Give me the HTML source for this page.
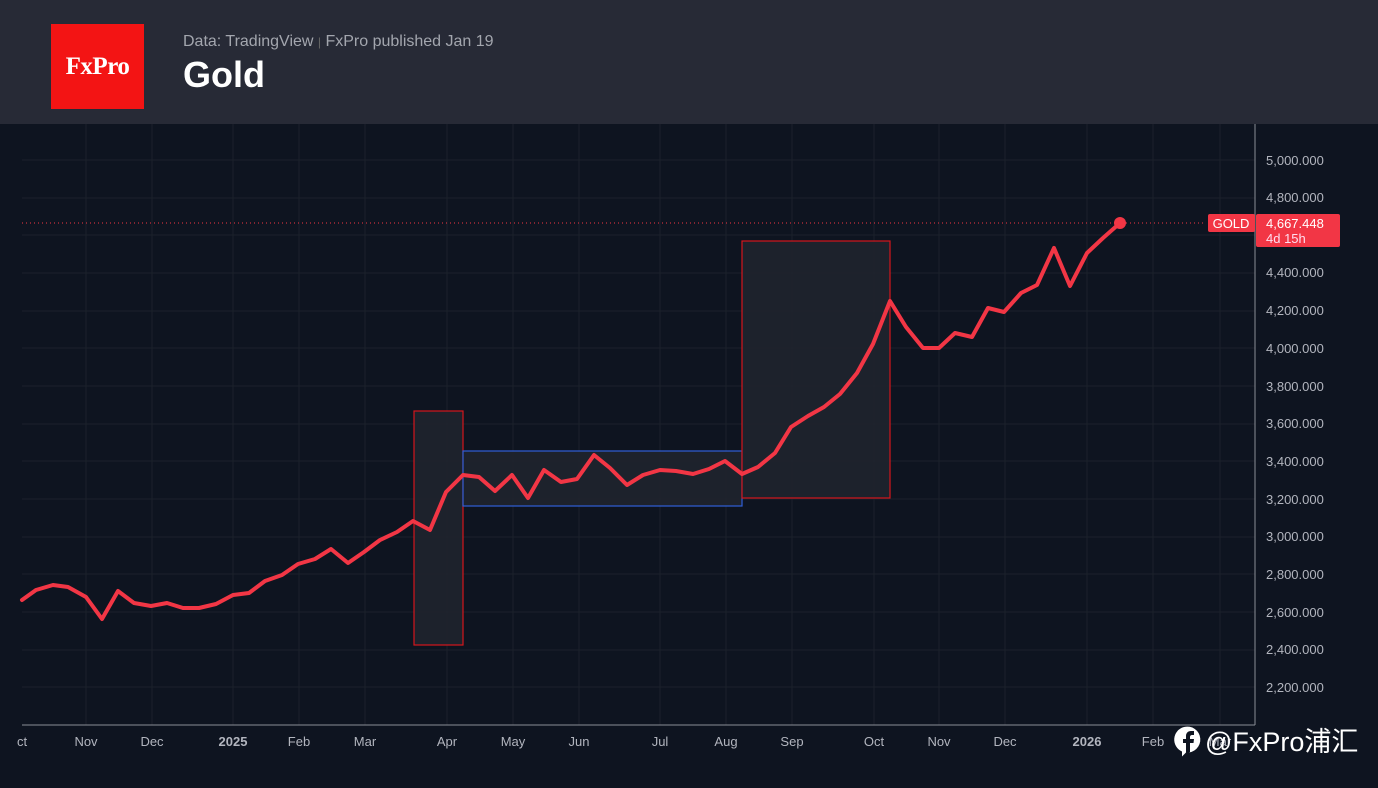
<!DOCTYPE html>
<html><head><meta charset="utf-8"><style>
html,body{margin:0;padding:0;width:1378px;height:788px;overflow:hidden;background:#0e1420;font-family:"Liberation Sans","Noto Sans CJK SC",sans-serif}
#hdr{position:absolute;left:0;top:0;width:1378px;height:124px;background:#272a36}
#logo{position:absolute;left:51px;top:24px;width:93px;height:85px;background:#f31414;color:#fff;font-family:"Liberation Serif",serif;font-size:25px;font-weight:bold;text-align:center;line-height:85px;letter-spacing:-0.5px}
#sub{position:absolute;left:183px;top:33px;color:#a3a6ae;font-size:16px}
#title{position:absolute;left:183px;top:54px;color:#fff;font-size:36px;font-weight:bold}
svg{position:absolute;left:0;top:0}
</style></head><body>
<svg width="1378" height="788" viewBox="0 0 1378 788">
<rect x="0" y="124" width="1378" height="664" fill="#0e1420"/>
<g stroke="#1c212b" stroke-width="1">
<line x1="22" y1="160" x2="1255" y2="160"/><line x1="22" y1="198" x2="1255" y2="198"/><line x1="22" y1="235" x2="1255" y2="235"/><line x1="22" y1="273" x2="1255" y2="273"/><line x1="22" y1="311" x2="1255" y2="311"/><line x1="22" y1="348" x2="1255" y2="348"/><line x1="22" y1="386" x2="1255" y2="386"/><line x1="22" y1="424" x2="1255" y2="424"/><line x1="22" y1="461" x2="1255" y2="461"/><line x1="22" y1="499" x2="1255" y2="499"/><line x1="22" y1="537" x2="1255" y2="537"/><line x1="22" y1="574" x2="1255" y2="574"/><line x1="22" y1="612" x2="1255" y2="612"/><line x1="22" y1="650" x2="1255" y2="650"/><line x1="22" y1="687" x2="1255" y2="687"/>
<line x1="86" y1="124" x2="86" y2="725"/><line x1="152" y1="124" x2="152" y2="725"/><line x1="233" y1="124" x2="233" y2="725"/><line x1="299" y1="124" x2="299" y2="725"/><line x1="365" y1="124" x2="365" y2="725"/><line x1="447" y1="124" x2="447" y2="725"/><line x1="513" y1="124" x2="513" y2="725"/><line x1="579" y1="124" x2="579" y2="725"/><line x1="660" y1="124" x2="660" y2="725"/><line x1="726" y1="124" x2="726" y2="725"/><line x1="792" y1="124" x2="792" y2="725"/><line x1="874" y1="124" x2="874" y2="725"/><line x1="939" y1="124" x2="939" y2="725"/><line x1="1005" y1="124" x2="1005" y2="725"/><line x1="1087" y1="124" x2="1087" y2="725"/><line x1="1153" y1="124" x2="1153" y2="725"/><line x1="1220" y1="124" x2="1220" y2="725"/>
</g>
<line x1="22" y1="725" x2="1255" y2="725" stroke="#8a8e96" stroke-width="1"/>
<line x1="1255" y1="124" x2="1255" y2="725" stroke="#8a8e96" stroke-width="1"/>
<rect x="414" y="411" width="49" height="234" fill="#1f232d" fill-opacity=".9" stroke="#d4161c" stroke-width="1.2"/>
<rect x="463" y="451" width="279" height="55" fill="#1f232d" fill-opacity=".9" stroke="#2f5fd8" stroke-width="1.2"/>
<rect x="742" y="241" width="148" height="257" fill="#1f232d" fill-opacity=".9" stroke="#d4161c" stroke-width="1.2"/>
<line x1="22" y1="223" x2="1205" y2="223" stroke="#f23645" stroke-width="1" stroke-dasharray="1,3"/>
<polyline fill="none" stroke="#f23645" stroke-width="4" stroke-linejoin="round" stroke-linecap="round" points="22,600 36,590 53,585 68,587 86,597 102,619 118,591 134,603 151,606 167,603 183,608 199,608 216,604 233,595 249,593 265,581 282,575 298,564 315,559 331,549 348,563 364,552 380,540 397,532 413,521 430,530 446,492 463,475 479,477 495,491 512,475 528,498 544,470 561,482 577,479 594,455 610,468 627,485 643,475 660,470 676,471 693,474 709,469 725,461 742,474 758,467 775,453 791,427 808,416 824,407 840,394 857,373 873,344 890,301 906,327 923,348 939,348 955,333 972,337 988,308 1004,312 1021,293 1037,285 1054,248 1070,286 1087,253 1103,238 1120,223"/>
<circle cx="1120" cy="223" r="6" fill="#f23645"/>
<rect x="1208" y="214" width="47" height="18" rx="2" fill="#f23645"/>
<text x="1231" y="228" fill="#fff" font-size="13" text-anchor="middle">GOLD</text>
<rect x="1256" y="214" width="84" height="33" rx="2" fill="#f23645"/>
<text x="1266" y="228" fill="#fff" font-size="13">4,667.448</text>
<text x="1266" y="243" fill="#fde" font-size="13">4d 15h</text>
<g fill="#b2b5be" font-size="13">
<text x="1266" y="165">5,000.000</text><text x="1266" y="202">4,800.000</text><text x="1266" y="277">4,400.000</text><text x="1266" y="315">4,200.000</text><text x="1266" y="353">4,000.000</text><text x="1266" y="391">3,800.000</text><text x="1266" y="428">3,600.000</text><text x="1266" y="466">3,400.000</text><text x="1266" y="504">3,200.000</text><text x="1266" y="541">3,000.000</text><text x="1266" y="579">2,800.000</text><text x="1266" y="617">2,600.000</text><text x="1266" y="654">2,400.000</text><text x="1266" y="692">2,200.000</text>
</g>
<g fill="#b2b5be" font-size="13" text-anchor="middle">
<text x="22" y="746">ct</text><text x="86" y="746">Nov</text><text x="152" y="746">Dec</text><text x="233" y="746" font-weight="bold">2025</text><text x="299" y="746">Feb</text><text x="365" y="746">Mar</text><text x="447" y="746">Apr</text><text x="513" y="746">May</text><text x="579" y="746">Jun</text><text x="660" y="746">Jul</text><text x="726" y="746">Aug</text><text x="792" y="746">Sep</text><text x="874" y="746">Oct</text><text x="939" y="746">Nov</text><text x="1005" y="746">Dec</text><text x="1087" y="746" font-weight="bold">2026</text><text x="1153" y="746">Feb</text><text x="1220" y="746">Mar</text>
</g>
<path d="M1184 727a13 13 0 1 1 2 25.5l-4 4v-5a13 13 0 0 1 2-24.5z" fill="#fff"/>
<path d="M1186 754v-11h-3v-4h3v-3c0-3 2-5 5-5h3v4h-2c-1 0-2 .5-2 2v2h4l-.5 4h-3.5v9z" fill="#0e1420"/>
<text x="1205" y="751" fill="#fff" font-size="27">@FxPro浦汇</text>
</svg>
<div id="hdr"><div id="logo">FxPro</div>
<div id="sub">Data: TradingView <span style="color:#666;font-size:12px">|</span> FxPro published Jan 19</div>
<div id="title">Gold</div></div>
</body></html>
